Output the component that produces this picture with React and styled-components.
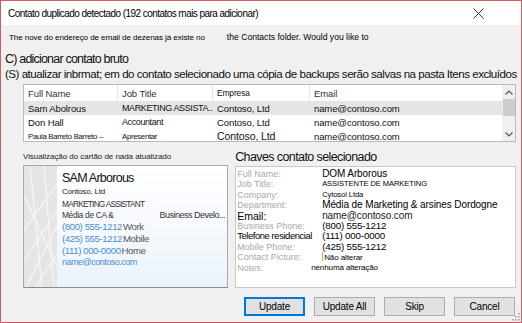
import React from 'react'
import styled, { createGlobalStyle } from 'styled-components'

const GlobalStyle = createGlobalStyle`
  html, body {
    margin: 0;
    padding: 0;
    background: #ffffff;
  }
  body {
    font-family: "Liberation Sans", Arial, sans-serif;
    -webkit-font-smoothing: antialiased;
  }
`

const Window = styled.div`
  position: relative;
  width: 522px;
  height: 323px;
  box-sizing: border-box;
  border: 1px solid #d25a63;
  background: #f0f0f0;
  display: flex;
  flex-direction: column;
  overflow: hidden;
`

const TitleBar = styled.div`
  flex-shrink: 0;
  height: 24px;
  background: #ffffff;
  display: flex;
  align-items: center;
  justify-content: space-between;
  padding-left: 7px;
`

const Title = styled.div`
  font-size: 10px;
  letter-spacing: -0.55px;
  color: #000;
`

const CloseButton = styled.div`
  width: 44px;
  height: 24px;
  margin-right: 21px;
  display: flex;
  align-items: center;
  justify-content: center;
`

const Body = styled.div`
  flex: 1;
  display: flex;
  flex-direction: column;
  padding: 0 5px 0 4px;
`

const Intro = styled.div`
  margin-top: 4px;
  margin-left: 4px;
  height: 12px;
  line-height: 12px;
  white-space: nowrap;
  color: #000;
`

const Small = styled.span`
  font-size: ${p => p.size || 8}px;
  letter-spacing: ${p => p.ls || 0}px;
  color: ${p => p.color || 'inherit'};
  margin-left: ${p => p.gap || 0}px;
`

const Option = styled.div`
  margin-top: ${p => p.top || 0}px;
  font-size: ${p => p.size}px;
  line-height: ${p => p.lh}px;
  letter-spacing: ${p => p.ls}px;
  white-space: nowrap;
  color: #111;
`

const Table = styled.div`
  margin: 3px 0 0 18px;
  height: 58px;
  box-sizing: border-box;
  border: 1px solid #b9b9b9;
  background: #ffffff;
  display: flex;
  overflow: hidden;
`

const Rows = styled.div`
  flex: 1;
  display: flex;
  flex-direction: column;
`

const Row = styled.div`
  display: grid;
  grid-template-columns: 94px 95px 97px 1fr;
  height: ${p => p.h || 14}px;
  flex-shrink: 0;
  align-items: center;
  background: ${p => (p.selected ? '#e5e5e5' : '#ffffff')};
`

const Cell = styled.div`
  padding-left: 4px;
  font-size: ${p => p.size || 9.5}px;
  letter-spacing: ${p => p.ls || -0.1}px;
  color: ${p => p.color || '#111'};
  white-space: nowrap;
  overflow: hidden;
  height: 100%;
  display: flex;
  align-items: center;
  border-right: ${p => (p.divider ? '1px solid #e5e5e5' : 'none')};
  box-sizing: border-box;
`

const ScrollBar = styled.div`
  width: 13px;
  background: #f0f0f0;
  display: flex;
  flex-direction: column;
  align-items: center;
`

const ScrollArrow = styled.div`
  height: 14px;
  width: 100%;
  display: flex;
  align-items: center;
  justify-content: center;
`

const ScrollThumb = styled.div`
  width: 12px;
  height: 17px;
  background: #cdcdcd;
`

const ScrollTrack = styled.div`
  flex: 1;
`

const Lower = styled.div`
  margin-top: 8px;
  display: flex;
`

const CardColumn = styled.div`
  width: 206px;
  margin-left: 18px;
  display: flex;
  flex-direction: column;
`

const Caption = styled.div`
  height: 15px;
  line-height: 14px;
  font-size: 8px;
  letter-spacing: -0.05px;
  color: #222;
  white-space: nowrap;
`

const Card = styled.div`
  height: 123px;
  box-sizing: border-box;
  border: 1px solid #a9a9a9;
  border-bottom-color: #8a8a8a;
  display: flex;
  background: linear-gradient(180deg, #ffffff 0%, #f6f9fd 50%, #ebf3fc 100%);
  overflow: hidden;
`

const CardStrip = styled.div`
  width: 33px;
  flex-shrink: 0;
  background: #e6e6e6;
  display: flex;
`

const CardBody = styled.div`
  flex: 1;
  padding: 4px 0 0 5px;
  display: flex;
  flex-direction: column;
  white-space: nowrap;
  overflow: hidden;
`

const CardLine = styled.div`
  height: ${p => p.lh}px;
  line-height: ${p => p.lh}px;
  margin-top: ${p => p.top || 0}px;
  font-size: ${p => p.size}px;
  letter-spacing: ${p => p.ls || 0}px;
  color: ${p => p.color || '#333'};
  display: flex;
`

const Phone = styled.span`
  color: #4a8fd8;
`

const PhoneKind = styled.span`
  color: #555;
  margin-left: 1px;
`

const Department = styled.span`
  font-size: 8.3px;
`

const Division = styled.span`
  margin-left: 46px;
  letter-spacing: -0.5px;
`

const KeysColumn = styled.div`
  width: 282px;
  margin-left: 7px;
  display: flex;
  flex-direction: column;
`

const KeysHeader = styled.div`
  height: 16px;
  line-height: 15px;
  font-size: 12.5px;
  letter-spacing: -0.6px;
  color: #111;
  white-space: nowrap;
`

const KeysBox = styled.div`
  height: 122px;
  box-sizing: border-box;
  border: 1px solid #c9c9c9;
  background: #ffffff;
  padding: 2px 0 0 1px;
  display: grid;
  grid-template-columns: 85px 1fr;
  grid-auto-rows: 10.4px;
  align-items: center;
`

const KeyLabel = styled.div`
  font-size: ${p => p.size || 9}px;
  letter-spacing: ${p => p.ls || 0}px;
  color: ${p => (p.strong ? '#000' : '#a8a8a8')};
  white-space: nowrap;
  line-height: 10.4px;
  overflow: hidden;
`

const KeyValue = styled.div`
  font-size: ${p => p.size || 10}px;
  letter-spacing: ${p => p.ls || -0.1}px;
  color: ${p => p.color || '#000'};
  margin-left: ${p => p.shift || 0}px;
  white-space: nowrap;
  line-height: 10.4px;
`

const Caret = styled.span`
  display: inline-block;
  width: 1px;
  height: 9px;
  background: #f0a040;
  margin-right: 1px;
  vertical-align: -1px;
`

const Buttons = styled.div`
  margin-top: 9px;
  display: flex;
  justify-content: flex-end;
  gap: 9px;
  padding-right: 1px;
`

const Button = styled.div`
  width: 61px;
  height: 19px;
  box-sizing: border-box;
  border: 1px solid ${p => (p.primary ? '#0078d7' : '#adadad')};
  box-shadow: ${p => (p.primary ? 'inset 0 0 0 1px #0078d7' : 'none')};
  background: #e1e1e1;
  display: flex;
  align-items: center;
  justify-content: center;
  font-size: 10px;
  letter-spacing: -0.2px;
  color: #000;
`

const Grip = styled.svg`
  position: absolute;
  right: 1px;
  bottom: 1px;
`

const contacts = [
  { name: 'Sam Abolrous', job: 'MARKETING ASSISTA...', company: 'Contoso, Ltd', selected: true },
  { name: 'Don Hall', job: 'Accountant', company: 'Contoso, Ltd' },
]

const keys = [
  { label: 'Full Name:', value: 'DOM Arborous', vsize: 10 },
  { label: 'Job Title:', value: 'ASSISTENTE DE MARKETING', vsize: 7.6 },
  { label: 'Company:', value: 'Cytosol Ltda', vsize: 7.6 },
  { label: 'Department:', value: 'Média de Marketing & arsines Dordogne', vsize: 10 },
  { label: 'Email:', value: 'name@contoso.com', vsize: 10, strong: true, lsize: 10.5, color: '#222' },
  { label: 'Business Phone:', value: '(800) 555-1212', vsize: 9.8, vls: -0.2 },
  { label: 'Telefone residencial', value: '(111) 000-0000', vsize: 9.8, vls: -0.2, strong: true, lsize: 9.4, ls: -0.4 },
  { label: 'Mobile Phone:', value: '(425) 555-1212', vsize: 9.8, vls: -0.2 },
  { label: 'Contact Picture:', value: 'Não alterar', vsize: 8, caret: true },
  { label: 'Notes:', value: 'nenhuma alteração', vsize: 8, shift: -11 },
]

function CardPattern() {
  return (
    <svg width="33" height="121" viewBox="0 0 33 121">
      <rect width="33" height="121" fill="#e5e5e5" />
      <g stroke="#f7f7f7" strokeWidth="1.2" fill="none">
        <line x1="-4" y1="70" x2="33" y2="18" />
        <line x1="2" y1="121" x2="33" y2="60" />
        <line x1="12" y1="121" x2="33" y2="88" />
        <line x1="0" y1="30" x2="33" y2="100" />
        <line x1="6" y1="0" x2="18" y2="121" />
        <line x1="20" y1="0" x2="30" y2="121" />
        <line x1="0" y1="95" x2="33" y2="45" />
      </g>
    </svg>
  )
}

export default function App() {
  return (
    <>
      <GlobalStyle />
      <Window>
        <TitleBar>
          <Title>Contato duplicado detectado (192 contatos mais para adicionar)</Title>
          <CloseButton>
            <svg width="11" height="11" viewBox="0 0 11 11">
              <path d="M0.5 0.5 L10.5 10.5 M10.5 0.5 L0.5 10.5" stroke="#333" strokeWidth="1" />
            </svg>
          </CloseButton>
        </TitleBar>
        <Body>
          <Intro>
            <Small size={8.1} ls={-0.1}>The nove do endereço de email de dezenas já existe no</Small>
            <Small size={8.6} gap={22}>the Contacts folder. Would you like to</Small>
          </Intro>
          <Option top={11} size={12.5} lh={15} ls={-0.8}>C) adicionar contato bruto</Option>
          <Option size={11.6} lh={14} ls={-0.5}>
            (S) atualizar inbrmat; em do contato selecionado uma cópia de backups serão salvas na pasta Itens excluídos
          </Option>
          <Table>
            <Rows>
              <Row h={16}>
                <Cell divider color="#333">Full Name</Cell>
                <Cell divider color="#333">Job Title</Cell>
                <Cell divider color="#111" size={8.4}>Empresa</Cell>
                <Cell color="#333">Email</Cell>
              </Row>
              {contacts.map(c => (
                <Row key={c.name} selected={c.selected}>
                  <Cell>{c.name}</Cell>
                  <Cell size={9} ls={-0.4}>{c.job}</Cell>
                  <Cell>{c.company}</Cell>
                  <Cell>name@contoso.com</Cell>
                </Row>
              ))}
              <Row h={14}>
                <Cell size={7.8} ls={-0.3}>Paula Barreto Barreto –</Cell>
                <Cell size={7.8} ls={-0.3}>Apresentar</Cell>
                <Cell size={10.5}>Contoso, Ltd</Cell>
                <Cell>name@contoso.com</Cell>
              </Row>
            </Rows>
            <ScrollBar>
              <ScrollArrow>
                <svg width="8" height="5" viewBox="0 0 8 5">
                  <path d="M0.5 4.5 L4 1 L7.5 4.5" stroke="#555" strokeWidth="1.2" fill="none" />
                </svg>
              </ScrollArrow>
              <ScrollThumb />
              <ScrollTrack />
              <ScrollArrow>
                <svg width="8" height="5" viewBox="0 0 8 5">
                  <path d="M0.5 0.5 L4 4 L7.5 0.5" stroke="#555" strokeWidth="1.2" fill="none" />
                </svg>
              </ScrollArrow>
            </ScrollBar>
          </Table>
          <Lower>
            <CardColumn>
              <Caption>Visualização do cartão de nada atualizado</Caption>
              <Card>
                <CardStrip>
                  <CardPattern />
                </CardStrip>
                <CardBody>
                  <CardLine lh={16} size={12.5} ls={-0.75} color="#111">SAM Arborous</CardLine>
                  <CardLine lh={12} size={8} ls={-0.2} color="#222">Contoso, Ltd</CardLine>
                  <CardLine lh={11} size={8.3} ls={-0.75} color="#333" top={1}>MARKETING ASSISTANT</CardLine>
                  <CardLine lh={11} size={9} ls={-0.3} color="#333">
                    <Department>Média de CA &amp;</Department>
                    <Division>Business Develo...</Division>
                  </CardLine>
                  <CardLine lh={12} size={9.6} ls={-0.4}>
                    <Phone>(800) 555-1212</Phone><PhoneKind>Work</PhoneKind>
                  </CardLine>
                  <CardLine lh={12} size={9.6} ls={-0.4}>
                    <Phone>(425) 555-1212</Phone><PhoneKind>Mobile</PhoneKind>
                  </CardLine>
                  <CardLine lh={11} size={9.6} ls={-0.4}>
                    <Phone>(111) 000-0000</Phone><PhoneKind>Home</PhoneKind>
                  </CardLine>
                  <CardLine lh={12} size={9} ls={-0.5}>
                    <Phone>name@contoso.com</Phone>
                  </CardLine>
                </CardBody>
              </Card>
            </CardColumn>
            <KeysColumn>
              <KeysHeader>Chaves contato selecionado</KeysHeader>
              <KeysBox>
                {keys.map(k => (
                  <React.Fragment key={k.label}>
                    <KeyLabel strong={k.strong} size={k.lsize} ls={k.ls}>{k.label}</KeyLabel>
                    <KeyValue size={k.vsize} ls={k.vls} color={k.color} shift={k.shift}>
                      {k.caret && <Caret />}
                      {k.value}
                    </KeyValue>
                  </React.Fragment>
                ))}
              </KeysBox>
            </KeysColumn>
          </Lower>
          <Buttons>
            <Button primary>Update</Button>
            <Button>Update All</Button>
            <Button>Skip</Button>
            <Button>Cancel</Button>
          </Buttons>
        </Body>
        <Grip width="8" height="8" viewBox="0 0 8 8">
          <g fill="#9a9a9a">
            <rect x="6" y="0" width="1.5" height="1.5" />
            <rect x="3" y="3" width="1.5" height="1.5" />
            <rect x="6" y="3" width="1.5" height="1.5" />
            <rect x="0" y="6" width="1.5" height="1.5" />
            <rect x="3" y="6" width="1.5" height="1.5" />
            <rect x="6" y="6" width="1.5" height="1.5" />
          </g>
        </Grip>
      </Window>
    </>
  )
}
